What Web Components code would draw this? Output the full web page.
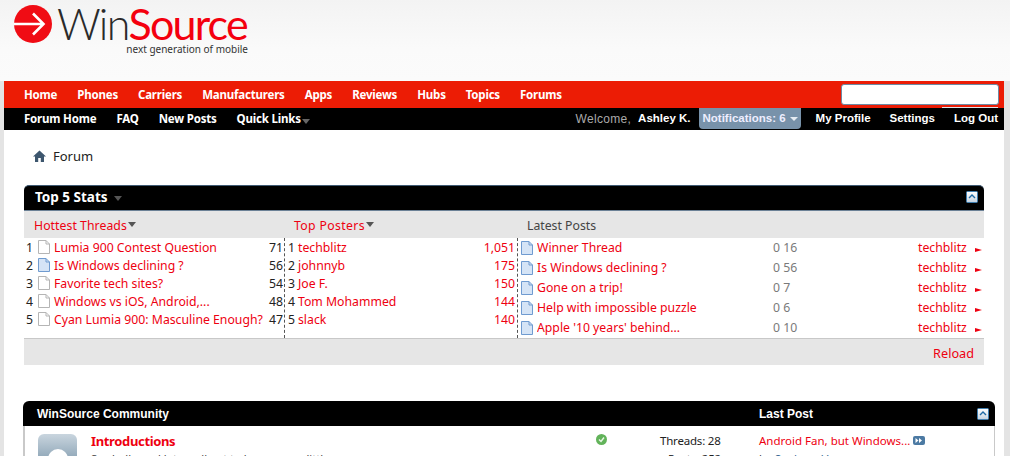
<!DOCTYPE html>
<html lang="en">
<head>
<meta charset="UTF-8">
<title>WinSource Forum</title>
<style>
  html, body { margin: 0; height: 456px; overflow: hidden; background: #e4e4e4; }
  body { font: 13px "Noto Sans", sans-serif; }
</style>
</head>
<body>
<ws-page>
  <ws-logo slot="logo"></ws-logo>
  <ws-nav slot="nav"></ws-nav>
  <ws-crumb slot="crumb"></ws-crumb>
  <ws-stats slot="stats"></ws-stats>
  <ws-community slot="community"></ws-community>
</ws-page>

<script>
  const FONT = '"Noto Sans", sans-serif';
  const ARIAL = '"Liberation Sans", sans-serif';
  const RED = '#ee0010';

  class WsPage extends HTMLElement {
    constructor() {
      super();
      this.attachShadow({ mode: 'open' });
      this.shadowRoot.innerHTML = `
        <style>
          :host { display: block; width: 1010px; }
          .top { height: 81px; background: linear-gradient(#f3f3f3, #fafafa 60%, #fbfbfb); }
          .wrap { margin: 0 6px 0 4px; background: #fff; height: 375px; overflow: hidden; }
        </style>
        <div class="top"><slot name="logo"></slot></div>
        <div class="wrap">
          <slot name="nav"></slot>
          <slot name="crumb"></slot>
          <slot name="stats"></slot>
          <slot name="community"></slot>
        </div>`;
    }
  }

  class WsLogo extends HTMLElement {
    constructor() {
      super();
      this.attachShadow({ mode: 'open' });
      this.shadowRoot.innerHTML = `
        <style>
          :host { display: block; height: 81px; }
          .logo { display: flex; padding: 5px 0 0 14px; }
          svg { display: block; flex: none; }
          .name { margin-left: 5px; width: 191px; }
          .word { font: 300 43px/38px Lato, sans-serif; letter-spacing: -1.8px; color: #2a2a2a; white-space: nowrap; height: 38px; }
          .word span { color: #f4000f; font-weight: 400; }
          .tag { font: 10px/14px "Noto Sans", sans-serif; color: #333; text-align: right; white-space: nowrap; margin-top: -1px; }
        </style>
        <div class="logo">
          <svg width="38" height="38" viewBox="0 0 38 38">
            <circle cx="19" cy="19" r="19" fill="#f00c14"/>
            <path d="M0 19H29M19 8.5L29.5 19L19 29.5" fill="none" stroke="#fff" stroke-width="2.6"/>
          </svg>
          <div class="name">
            <div class="word">Win<span>Source</span></div>
            <div class="tag">next generation of mobile</div>
          </div>
        </div>`;
    }
  }

  class WsNav extends HTMLElement {
    constructor() {
      super();
      this.attachShadow({ mode: 'open' });
      const main = ['Home', 'Phones', 'Carriers', 'Manufacturers', 'Apps', 'Reviews', 'Hubs', 'Topics', 'Forums'];
      this.shadowRoot.innerHTML = `
        <style>
          :host { display: block; font: bold 11.5px/1 ${FONT}; letter-spacing: -.2px; color: #fff; }
          .red { height: 27px; background: #ec1c05; display: flex; align-items: center; padding-left: 20px; gap: 20px; position: relative; }
          .black { height: 22px; background: #000; display: flex; align-items: center; padding: 0 6px 0 20px; }
          .sub { display: flex; gap: 20px; align-items: center; }
          .right { margin-left: auto; display: flex; align-items: center; height: 22px; font: bold 11.5px/1 ${ARIAL}; letter-spacing: 0; }
          .welcome { color: #aaa; font-weight: normal; font-size: 12px; letter-spacing: .3px; margin-right: 7px; }
          .user { margin-right: 8px; }
          .notif { background: #7892aa; color: #eef; height: 21px; border-radius: 0 0 4px 4px; padding: 0 3px 0 4px; display: flex; align-items: center; gap: 4px; margin-right: 15px; margin-top: -1px; }
          .notif i { border: 4px solid transparent; border-top-color: #e6ecf2; border-bottom: 0; }
          .links { display: flex; gap: 19px; }
          .arrow { display: inline-block; border: 4px solid transparent; border-top: 5px solid #666; border-bottom: 0; margin-left: 1px; vertical-align: -1px; }
          .search { position: absolute; right: 5px; top: 3px; width: 156px; height: 19px; background: #fff; border: 1px solid #6f8aa3; border-radius: 3px; }
          .strip { position: absolute; right: 6px; top: 26px; width: 56px; height: 1px; background: #dfe6ec; }
        </style>
        <div class="red">
          ${main.map(t => `<span>${t}</span>`).join('')}
          <div class="search"></div>
          <div class="strip"></div>
        </div>
        <div class="black">
          <div class="sub">
            <span>Forum Home</span><span>FAQ</span><span>New Posts</span>
            <span>Quick Links<i class="arrow"></i></span>
          </div>
          <div class="right">
            <span class="welcome">Welcome,</span>
            <span class="user">Ashley K.</span>
            <div class="notif">Notifications: 6 <i></i></div>
            <div class="links"><span>My Profile</span><span>Settings</span><span>Log Out</span></div>
          </div>
        </div>`;
    }
  }

  class WsCrumb extends HTMLElement {
    constructor() {
      super();
      this.attachShadow({ mode: 'open' });
      this.shadowRoot.innerHTML = `
        <style>
          :host { display: flex; align-items: center; height: 55px; padding: 0 0 4px 29px; box-sizing: border-box; font: 13px ${FONT}; color: #222; }
          svg { margin-right: 7px; }
        </style>
        <svg width="13" height="12" viewBox="0 0 13 12"><path d="M6.5 0.5L0 6.5H2V12H5.2V8H7.8V12H11V6.5H13Z" fill="#3d566e"/></svg>
        <span>Forum</span>`;
    }
  }

  class WsDoc extends HTMLElement {
    constructor() {
      super();
      this.attachShadow({ mode: 'open' });
      const blue = this.hasAttribute('blue');
      const fill = blue ? '#d5e4f6' : '#fff';
      const line = blue ? '#6f9bd0' : '#b5b5b5';
      this.shadowRoot.innerHTML = `
        <style>:host { display: inline-block; width: 12px; height: 14px; } svg { display: block; }</style>
        <svg width="12" height="14" viewBox="0 0 12 14">
          <path d="M.5 .5H8L11.5 4V13.5H.5Z" fill="${fill}" stroke="${line}"/>
          <path d="M8 .5V4H11.5" fill="none" stroke="${line}"/>
        </svg>`;
    }
  }

  class WsToggle extends HTMLElement {
    constructor() {
      super();
      this.attachShadow({ mode: 'open' });
      this.shadowRoot.innerHTML = `
        <style>:host { display: block; width: 12px; height: 12px; } svg { display: block; }</style>
        <svg width="12" height="12" viewBox="0 0 12 12">
          <defs><linearGradient id="g" x1="0" y1="0" x2="0" y2="1"><stop offset="0" stop-color="#fff"/><stop offset="1" stop-color="#c5d3e0"/></linearGradient></defs>
          <rect x=".5" y=".5" width="11" height="11" rx="1" fill="url(#g)" stroke="#3f7eb0"/>
          <path d="M3 7L6 4L9 7" fill="none" stroke="#1f6aa5" stroke-width="1.4"/>
        </svg>`;
    }
  }

  class WsStats extends HTMLElement {
    constructor() {
      super();
      this.attachShadow({ mode: 'open' });
      const hot = [['Lumia 900 Contest Question', 71], ['Is Windows declining ?', 56, 1], ['Favorite tech sites?', 54], ['Windows vs iOS, Android,...', 48], ['Cyan Lumia 900: Masculine Enough?', 47]];
      const top = [['techblitz', '1,051'], ['johnnyb', 175], ['Joe F.', 150], ['Tom Mohammed', 144], ['slack', 140]];
      const last = [['Winner Thread', '0 16'], ['Is Windows declining ?', '0 56'], ['Gone on a trip!', '0 7'], ['Help with impossible puzzle', '0 6'], ["Apple '10 years' behind...", '0 10']];
      this.shadowRoot.innerHTML = `
        <style>
          :host { display: block; margin: 0 20px; font: 12.25px/18px ${FONT}; color: #222; }
          .head { height: 26px; box-sizing: border-box; background: #000; border-top: 1px solid #3f5a73; border-bottom: 1px solid #6c8196; border-radius: 5px 5px 0 0; display: flex; align-items: center; padding: 0 6px 2px 11px; color: #fff; font: bold 13.5px ${FONT}; }
          .head i { border: 4px solid transparent; border-top: 5px solid #555; border-bottom: 0; margin: 2px 0 0 6px; }
          .head ws-toggle { margin-left: auto; }
          .cols { display: grid; grid-template-columns: 260px 233px 467px; }
          .th { height: 27px; box-sizing: border-box; padding: 2px 0 0 10px; background: #e6e6e6; display: flex; align-items: center; color: ${RED}; }
          .th i { border: 4px solid transparent; border-top: 5px solid #555; border-bottom: 0; margin: 0 0 2px 1px; }
          .th.a { letter-spacing: .05px; }
          .th.b { letter-spacing: .35px; }
          .th.c { color: #444; }
          .col { height: 100px; box-sizing: border-box; padding-top: 1px; }
          .col.b, .col.c { border-left: 1px dashed #555; }
          .col.c { padding-top: 0; }
          .row { display: flex; align-items: center; height: 18px; padding: 0 2px 0 3px; white-space: nowrap; }
          .col.a .row { padding: 0 1px 0 2px; }
          .col.c .row { height: 20px; }
          .num { color: #222; width: 12px; flex: none; }
          .b .num { width: 10px; }
          .row ws-doc { margin-right: 4px; flex: none; }
          .a ws-doc { margin-bottom: 2px; }
          a { color: ${RED}; text-decoration: none; }
          .val { margin-left: auto; }
          .c .title { width: 236px; flex: none; overflow: hidden; }
          .c .vc { width: 145px; flex: none; color: #7a7a7a; }
          .c .who { width: 48px; flex: none; color: ${RED}; }
          .tri { width: 0; height: 0; border-left: 7px solid ${RED}; border-top: 2.5px solid transparent; border-bottom: 2.5px solid transparent; margin: 3px 0 0 9px; }
          .foot { height: 27px; background: #e6e6e6; border-top: 1px solid #c8c8c8; box-sizing: border-box; display: flex; align-items: center; justify-content: flex-end; padding: 1px 10px 0 0; color: ${RED}; font-size: 12.7px; }
        </style>
        <div class="head">Top 5 Stats<i></i><ws-toggle></ws-toggle></div>
        <div class="cols">
          <div class="th a">Hottest Threads<i></i></div>
          <div class="th b">Top Posters<i></i></div>
          <div class="th c">Latest Posts</div>
          <div class="col a">
            ${hot.map((r, i) => `<div class="row"><span class="num">${i + 1}</span><ws-doc ${r[2] ? 'blue' : ''}></ws-doc><a>${r[0]}</a><span class="val">${r[1]}</span></div>`).join('')}
          </div>
          <div class="col b">
            ${top.map((r, i) => `<div class="row"><span class="num">${i + 1}</span><a>${r[0]}</a><a class="val">${r[1]}</a></div>`).join('')}
          </div>
          <div class="col c">
            ${last.map(r => `<div class="row"><ws-doc blue></ws-doc><a class="title">${r[0]}</a><span class="vc">${r[1]}</span><a class="who">techblitz</a><span class="tri"></span></div>`).join('')}
          </div>
        </div>
        <div class="foot">Reload</div>`;
    }
  }

  class WsCommunity extends HTMLElement {
    constructor() {
      super();
      this.attachShadow({ mode: 'open' });
      this.shadowRoot.innerHTML = `
        <style>
          :host { display: block; margin: 36px 9px 0 19px; font: 11.5px/18px ${FONT}; color: #222; }
          .head { height: 25px; box-sizing: border-box; background: #000; border-radius: 6px 6px 0 0; color: #fff; font: bold 12px ${ARIAL}; display: grid; grid-template-columns: 722px 1fr auto; align-items: center; padding: 0 6px 0 14px; }
          .body { border-left: 2px solid #c9c9c9; border-right: 1px solid #c9c9c9; display: grid; grid-template-columns: 66px 516px 152px 1fr; height: 60px; }
          .forum-icon { width: 39px; height: 46px; margin: 8px 0 0 13px; border-radius: 6px 6px 0 0; background: linear-gradient(#c9d5de, #5e7f98); position: relative; overflow: hidden; }
          .forum-icon::after { content: ""; position: absolute; left: 10px; top: 15px; width: 20px; height: 20px; border-radius: 50%; background: #fff; }
          h3 { margin: 0; font: bold 13px/18px ${FONT}; letter-spacing: -.35px; color: ${RED}; padding-top: 6px; }
          p { margin: 1px 0 0; font-size: 11.2px; line-height: 16px; color: #444; }
          .status { position: relative; }
          .dot { position: absolute; right: 0; top: 8px; display: block; }
          .counts { padding: 6px 0 0 53px; white-space: nowrap; letter-spacing: -.2px; }
          .posts { padding-left: 8px; }
          .last { padding-top: 6px; white-space: nowrap; }
          .last a { color: ${RED}; }
          .last .by a { color: #3b6a94; }
          .go { display: inline-block; margin-left: 3px; vertical-align: 0; }
          .by { color: #444; }
        </style>
        <div class="head"><span>WinSource Community</span><span>Last Post</span><ws-toggle></ws-toggle></div>
        <div class="body">
          <div><div class="forum-icon"></div></div>
          <div class="status">
            <h3>Introductions</h3>
            <p>Say hello and let us all get to know you a little</p>
            <svg class="dot" width="11" height="11" viewBox="0 0 11 11"><circle cx="5.5" cy="5.5" r="5.5" fill="#62b35a"/><path d="M3 5.5L5 7.5L8 3.5" fill="none" stroke="#e9f6e6" stroke-width="1.4"/></svg>
          </div>
          <div class="counts">Threads: 28<div class="posts">Posts: 252</div></div>
          <div class="last"><a>Android Fan, but Windows...</a><svg class="go" width="12" height="9" viewBox="0 0 12 9"><rect width="12" height="9" rx="2" fill="#4c7aa3"/><path d="M2.5 2L5.5 4.5L2.5 7ZM6 2L9 4.5L6 7Z" fill="#fff"/></svg><div class="by">by <a>Seabass V.</a></div></div>
        </div>`;
    }
  }

  customElements.define('ws-page', WsPage);
  customElements.define('ws-logo', WsLogo);
  customElements.define('ws-nav', WsNav);
  customElements.define('ws-crumb', WsCrumb);
  customElements.define('ws-doc', WsDoc);
  customElements.define('ws-toggle', WsToggle);
  customElements.define('ws-stats', WsStats);
  customElements.define('ws-community', WsCommunity);
</script>
</body>
</html>
